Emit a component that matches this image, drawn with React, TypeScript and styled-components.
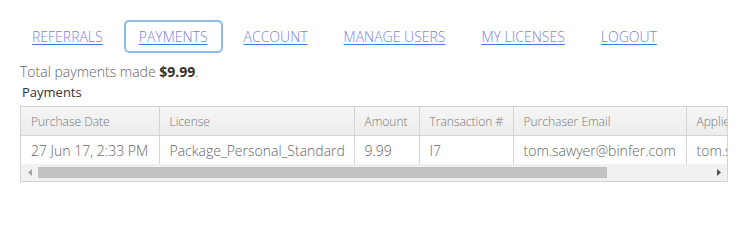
import React from 'react';
import styled, { createGlobalStyle } from 'styled-components';

const GlobalStyle = createGlobalStyle`
  body {
    margin: 0;
    background: #ffffff;
    font-family: "Open Sans", "Liberation Sans", sans-serif;
    font-weight: 300;
  }
`;

const Page = styled.div`
  padding: 20px 22px 0 20px;
`;

const Nav = styled.nav`
  display: flex;
  gap: 6px;
  margin-left: -3px;
  margin-bottom: 9px;
`;

const NavLink = styled.a<{ $active?: boolean }>`
  display: block;
  height: 29px;
  line-height: 29px;
  padding: 0 13px;
  font-size: 14px;
  color: #7b7fdc;
  text-decoration: underline;
  text-decoration-color: #3f7fd9;
  text-underline-offset: 2px;
  border: 2px solid ${(p) => (p.$active ? '#8fbcef' : 'transparent')};
  border-radius: 5px;
  cursor: pointer;
`;

const Summary = styled.div`
  font-size: 14px;
  color: #666;
  line-height: 19px;
`;

const Strong = styled.b`
  color: #333;
  font-weight: 700;
`;

const Caption = styled.div`
  font-size: 13px;
  font-weight: 400;
  color: #333;
  margin: 2px 0 4px 2px;
  line-height: 19px;
`;

const Grid = styled.div`
  width: 706px;
  border: 1px solid #d4d4d4;
  overflow: hidden;
`;

const Table = styled.table`
  border-collapse: collapse;
  table-layout: fixed;
  width: 875px;
`;

const Th = styled.th`
  height: 28px;
  padding: 0 10px;
  font-size: 12px;
  font-weight: 300;
  color: #777;
  text-align: left;
  white-space: nowrap;
  overflow: hidden;
  background: linear-gradient(#f6f6f6, #ececec);
  border-right: 1px solid #d4d4d4;
  border-bottom: 1px solid #d4d4d4;
`;

const Td = styled.td`
  height: 28px;
  padding: 0 10px;
  font-size: 14px;
  color: #666;
  white-space: nowrap;
  overflow: hidden;
  border-right: 1px solid #d4d4d4;
`;

const ScrollBar = styled.div`
  display: flex;
  align-items: center;
  height: 17px;
  background: #f1f1f1;
`;

const Arrow = styled.div`
  width: 17px;
  height: 17px;
  display: flex;
  align-items: center;
  justify-content: center;
  flex: none;
`;

const Track = styled.div`
  flex: 1;
  height: 11px;
`;

const Thumb = styled.div`
  height: 100%;
  background: #c1c1c1;
`;

const columns = [
  { label: 'Purchase Date', width: 138 },
  { label: 'License', width: 195 },
  { label: 'Amount', width: 65 },
  { label: 'Transaction #', width: 94 },
  { label: 'Purchaser Email', width: 173 },
  { label: 'Applied To', width: 210 },
];

const row = [
  '27 Jun 17, 2:33 PM',
  'Package_Personal_Standard',
  '9.99',
  'I7',
  'tom.sawyer@binfer.com',
  'tom.sawyer@binfer.com',
];

const links = ['REFERRALS', 'PAYMENTS', 'ACCOUNT', 'MANAGE USERS', 'MY LICENSES', 'LOGOUT'];

export default function App() {
  return (
    <Page>
      <GlobalStyle />
      <Nav>
        {links.map((l) => (
          <NavLink key={l} $active={l === 'PAYMENTS'}>
            {l}
          </NavLink>
        ))}
      </Nav>
      <Summary>
        Total payments made <Strong>$9.99</Strong>.
      </Summary>
      <Caption>Payments</Caption>
      <Grid>
        <Table>
          <colgroup>
            {columns.map((c) => (
              <col key={c.label} style={{ width: c.width }} />
            ))}
          </colgroup>
          <thead>
            <tr>
              {columns.map((c) => (
                <Th key={c.label}>{c.label}</Th>
              ))}
            </tr>
          </thead>
          <tbody>
            <tr>
              {row.map((v, i) => (
                <Td key={i}>{v}</Td>
              ))}
            </tr>
          </tbody>
        </Table>
        <ScrollBar>
          <Arrow>
            <svg width="4" height="7" viewBox="0 0 4 7">
              <path d="M4 0 L0 3.5 L4 7 Z" fill="#a3a3a3" />
            </svg>
          </Arrow>
          <Track>
            <Thumb style={{ width: 569 }} />
          </Track>
          <Arrow>
            <svg width="4" height="7" viewBox="0 0 4 7">
              <path d="M0 0 L4 3.5 L0 7 Z" fill="#505050" />
            </svg>
          </Arrow>
        </ScrollBar>
      </Grid>
    </Page>
  );
}
